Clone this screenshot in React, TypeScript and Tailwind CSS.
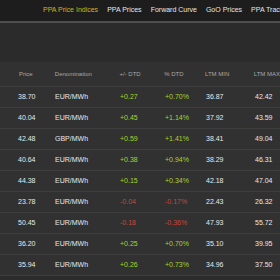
import React from "react";

const rows = [
  ["38.70", "EUR/MWh", "+0.27", "+0.70%", "36.87", "42.42"],
  ["40.04", "EUR/MWh", "+0.45", "+1.14%", "37.92", "43.59"],
  ["42.48", "GBP/MWh", "+0.59", "+1.41%", "38.41", "49.04"],
  ["40.64", "EUR/MWh", "+0.38", "+0.94%", "38.29", "46.31"],
  ["44.38", "EUR/MWh", "+0.15", "+0.34%", "42.18", "47.04"],
  ["23.78", "EUR/MWh", "-0.04", "-0.17%", "22.43", "26.32"],
  ["50.45", "EUR/MWh", "-0.18", "-0.36%", "47.93", "55.72"],
  ["36.20", "EUR/MWh", "+0.25", "+0.70%", "35.10", "39.95"],
  ["35.94", "EUR/MWh", "+0.26", "+0.73%", "34.96", "37.50"],
];

export default function App() {
  return (
    <div
      className="w-[280px] h-[280px] overflow-hidden bg-[#2b2b2b] text-[7px]"
      style={{ fontFamily: '"Liberation Sans", Arial, sans-serif' }}
    >
      <div className="h-[21px] bg-[#1d1d1d] flex items-center pl-[43px] gap-[9px] whitespace-nowrap">
        <span className="text-[#d4b21c]">PPA Price Indices</span>
        <span className="text-[#e6e6e6]">PPA Prices</span>
        <span className="text-[#e6e6e6]">Forward Curve</span>
        <span className="text-[#e6e6e6]">GoO Prices</span>
        <span className="text-[#e6e6e6]">PPA Tracker</span>
      </div>
      <div className="h-[2px] bg-[#4f4f4f]" />
      <div className="h-[39px]" />
      <div className="bg-[#313131]">
        <div className="h-[25px] flex items-center border-b border-[#3e3e3e] text-[#a8a8a8] text-[6px] whitespace-nowrap">
          <div className="w-[55px] pl-[19px]">Price</div>
          <div className="w-[65px]">Denomination</div>
          <div className="w-[45px]">+/- DTD</div>
          <div className="w-[41px]">% DTD</div>
          <div className="w-[49px]">LTM MIN</div>
          <div>LTM MAX</div>
        </div>
        {rows.map((r, i) => {
          const neg = r[2].startsWith("-");
          const c = neg ? "text-[#c9463a]" : "text-[#a8d42a]";
          return (
            <div
              key={i}
              className="h-[21px] flex items-center border-b border-[#3e3e3e] text-[#e8e8e8] whitespace-nowrap"
            >
              <div className="w-[55px] pl-[18px]">{r[0]}</div>
              <div className="w-[65px]">{r[1]}</div>
              <div className={`w-[45px] ${c}`}>{r[2]}</div>
              <div className={`w-[41px] ${c}`}>{r[3]}</div>
              <div className="w-[49px]">{r[4]}</div>
              <div>{r[5]}</div>
            </div>
          );
        })}
      </div>
    </div>
  );
}
